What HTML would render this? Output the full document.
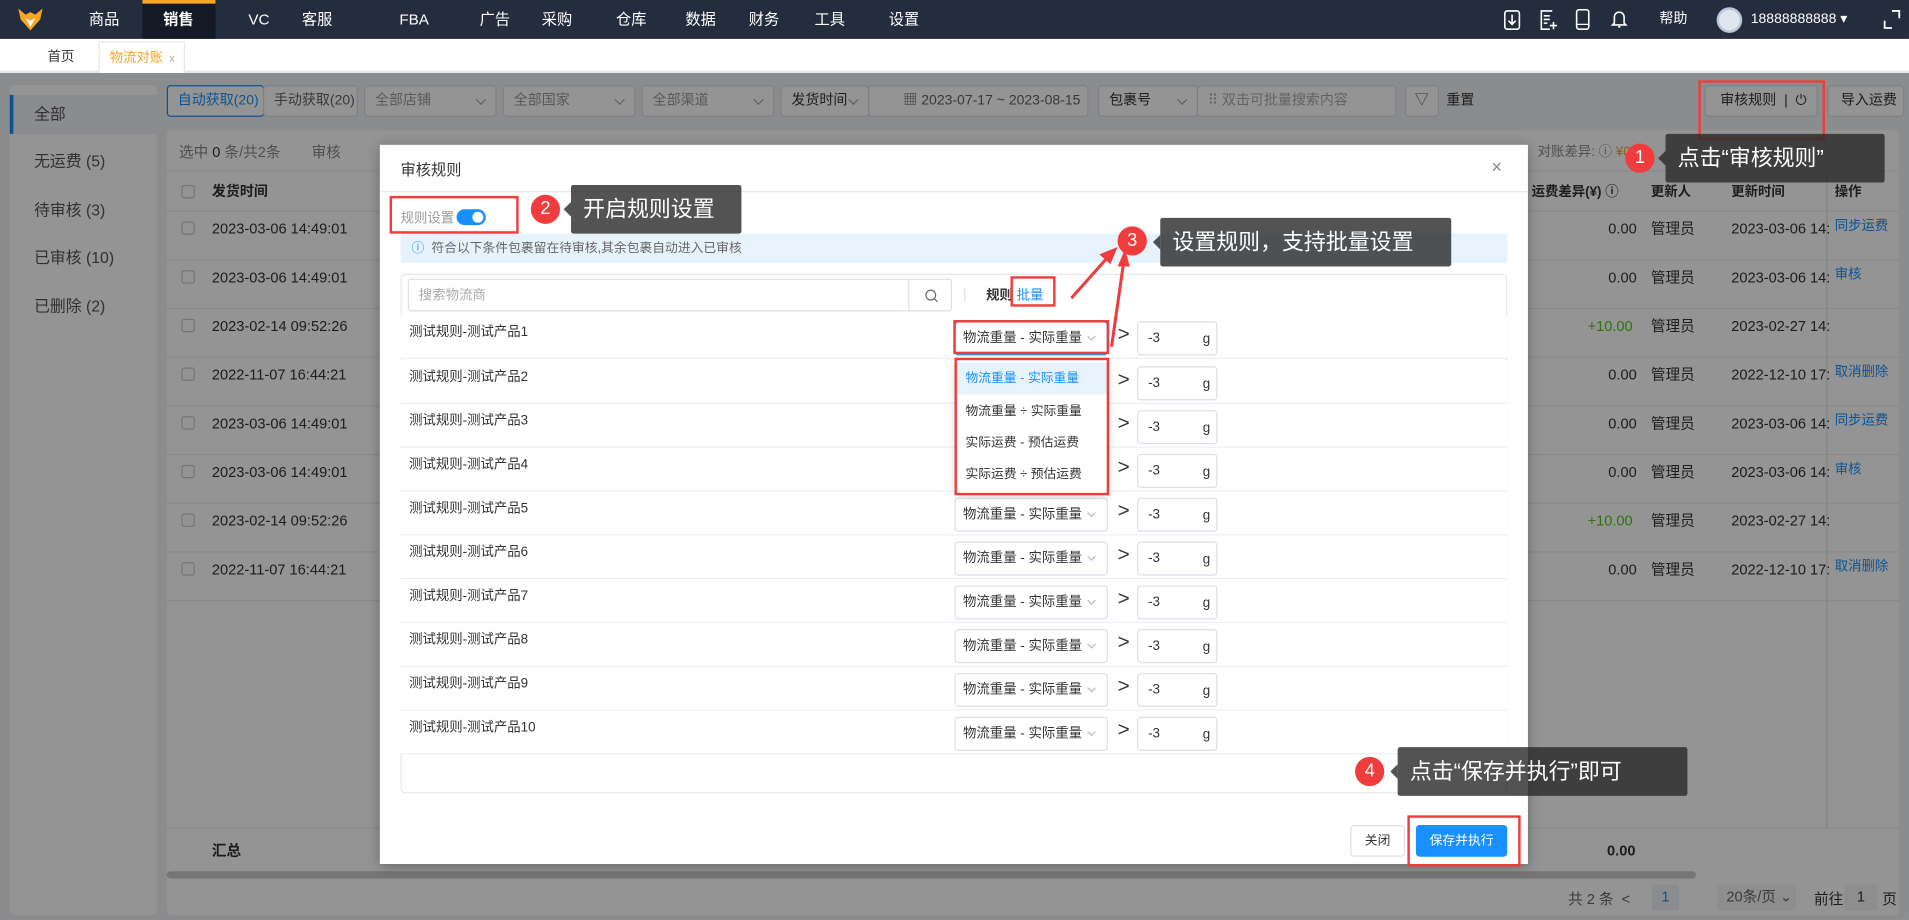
<!DOCTYPE html>
<html><head><meta charset="utf-8">
<style>
*{box-sizing:border-box;margin:0;padding:0}
html,body{width:1909px;height:920px;overflow:hidden;background:#f0f2f5}
body{font-family:"Liberation Sans","Noto Sans CJK SC",sans-serif;font-size:12px;color:#333;line-height:14px;white-space:nowrap}
#w{position:absolute;left:0;top:0;width:1568px;height:756px;transform:scale(1.21747,1.2169);transform-origin:0 0;background:#f0f2f5;overflow:hidden}
.a{position:absolute}
.nav{left:0;top:0;width:1568px;height:32px;background:#232d3d;color:#fff;font-size:12.5px}
.nav span{position:absolute;top:10px;line-height:13px}
.tabs{left:0;top:32px;width:1568px;height:28px;background:#fff;border-bottom:2px solid #e4e7ed}
.btn{position:absolute;background:#fff;border:1px solid #dcdfe6;border-radius:3px;color:#606266;font-size:11.5px;line-height:24px;padding:0 8px;height:26px;overflow:hidden}
.sel{color:#999}
.sel:after{content:"";position:absolute;right:9px;top:8px;width:5px;height:5px;border-right:1px solid #aaa;border-bottom:1px solid #aaa;transform:rotate(45deg)}
.side{left:8px;top:70px;width:121px;height:682px;background:#fff;border-radius:4px}
.side div{position:absolute;left:0;width:121px;padding-left:20px;font-size:13px;color:#555}
.card{left:137px;top:107px;width:1423px;height:645px;background:#fff;border-radius:4px}
.row{position:absolute;left:137px;width:1423px;height:40px;border-bottom:1px solid #ebeef5}
.cb{position:absolute;left:12px;width:11px;height:11px;border:1px solid #ccc;border-radius:2px;background:#fff}
.ov{left:0;top:60px;width:1568px;height:696px;background:rgba(0,0,0,0.42)}
.modal{left:312px;top:119px;width:943px;height:591px;background:#fff;box-shadow:0 2px 10px rgba(0,0,0,.3)}
.mrow{position:absolute;left:329px;width:909px;height:36px;border-bottom:1px solid #ebeef5;background:#fff}
.mrow .t{position:absolute;left:7px;top:7px;font-size:11px;color:#333}
.ms{position:absolute;left:455px;top:5px;width:126px;height:28px;border:1px solid #dcdfe6;border-radius:3px;font-size:11px;line-height:26px;padding-left:6px;color:#333}
.ms:after{content:"";position:absolute;right:10px;top:9px;width:4px;height:4px;border-right:1px solid #bbb;border-bottom:1px solid #bbb;transform:rotate(45deg)}
.gt{position:absolute;left:589px;top:7px;font-size:17px;line-height:17px;color:#333}
.mi{position:absolute;left:605px;top:5px;width:66px;height:28px;border:1px solid #dcdfe6;border-radius:3px;font-size:11px;line-height:26px;padding-left:8px}
.mi b{position:absolute;right:5px;font-weight:normal;top:1px}
.rb{position:absolute;border:2px solid #f03c3c}
.circ{position:absolute;width:24px;height:24px;border-radius:50%;background:#f03c3c;color:#fff;text-align:center;line-height:24px;font-size:15px}
.tip{position:absolute;background:rgba(40,40,40,.8);color:#fff;font-size:18px;height:40px;line-height:40px;padding:0 10px;border-radius:2px}
.tip:before{content:"";position:absolute;left:-6px;top:14px;border-top:6px solid transparent;border-bottom:6px solid transparent;border-right:6px solid rgba(40,40,40,.8)}
.blue{color:#1890ff}
</style></head><body><div id="w">

<div class="a nav">
 <svg class="a" style="left:14px;top:6px" width="22" height="20" viewBox="0 0 22 20"><path d="M1 1 L7 6 L11 4 L15 6 L21 1 L19 10 L11 19 L3 10 Z" fill="#f5a623"/><path d="M7 9 L11 16 L15 9 L11 11 Z" fill="#fff"/></svg>
 <div class="a" style="left:117px;top:0;width:60px;height:32px;background:#131a26;border-top:3px solid #f5a623"></div>
 <span style="left:73px">商品</span><span style="left:134px;font-weight:bold">销售</span><span style="left:204px">VC</span><span style="left:248px">客服</span><span style="left:328px">FBA</span><span style="left:394px">广告</span><span style="left:445px">采购</span><span style="left:506px">仓库</span><span style="left:563px">数据</span><span style="left:615px">财务</span><span style="left:669px">工具</span><span style="left:730px">设置</span>
 <svg class="a" style="left:1235px;top:8px" width="14" height="17" viewBox="0 0 14 17"><rect x="1" y="1" width="12" height="15" rx="2" stroke="#fff" fill="none" stroke-width="1.3"/><path d="M7 4 V12 M4 9 L7 12 L10 9" stroke="#fff" fill="none" stroke-width="1.3"/></svg>
 <svg class="a" style="left:1265px;top:8px" width="14" height="17" viewBox="0 0 14 17"><path d="M10 1 H1 V16 H8 M3 5 H8 M3 8 H8 M3 11 H6 M11 10 V16 M8 13 H14" stroke="#fff" fill="none" stroke-width="1.3"/></svg>
 <svg class="a" style="left:1294px;top:7px" width="12" height="18" viewBox="0 0 12 18"><rect x="1" y="1" width="10" height="16" rx="2" stroke="#fff" fill="none" stroke-width="1.3"/><path d="M1 13 H11" stroke="#fff"/></svg>
 <svg class="a" style="left:1323px;top:7px" width="14" height="17" viewBox="0 0 14 17"><path d="M3 12 V7 a4 4 0 0 1 8 0 V12 L12.5 13.5 H1.5 Z M6 15 h2" stroke="#fff" fill="none" stroke-width="1.3"/></svg>
 <span style="left:1363px;font-size:11.5px">帮助</span>
 <div class="a" style="left:1410px;top:6px;width:21px;height:21px;border-radius:50%;background:#dfe6f0;border:2px solid #b9c7db"></div>
 <span style="left:1438px;font-size:11.5px">18888888888 ▾</span>
 <svg class="a" style="left:1547px;top:8px" width="14" height="16" viewBox="0 0 14 16"><path d="M1 9 V15 H7 M7 1 H13 V7" stroke="#fff" fill="none" stroke-width="1.5"/></svg>
</div>
<div class="a tabs">
 <span class="a" style="left:39px;top:8px;font-size:11px">首页</span>
 <div class="a" style="left:81px;top:2px;width:71px;height:26px;border:1px solid #e4e7ed;border-bottom:none;background:#fff"><span class="a" style="left:8px;top:6px;font-size:11px;color:#f5a623">物流对账</span><span class="a" style="left:57px;top:6px;font-size:9px;color:#aaa">x</span></div>
</div>

<div class="a side">
 <div style="top:8px;height:32px;line-height:32px;background:#eef1f6;border-left:3px solid #1890ff;padding-left:17px">全部</div>
 <div style="top:56px">无运费 (5)</div><div style="top:96px">待审核 (3)</div><div style="top:135px">已审核 (10)</div><div style="top:175px">已删除 (2)</div>
</div>

<div class="btn" style="left:137px;top:70px;width:80px;color:#1890ff;border-color:#1890ff;padding:0 8px">自动获取(20)</div>
<div class="btn" style="left:216px;top:70px;width:78px">手动获取(20)</div>
<div class="btn sel" style="left:299px;top:70px;width:109px">全部店铺</div>
<div class="btn sel" style="left:413px;top:70px;width:109px">全部国家</div>
<div class="btn sel" style="left:527px;top:70px;width:109px">全部渠道</div>
<div class="btn sel" style="left:641px;top:70px;width:73px;color:#333">发货时间</div>
<div class="btn" style="left:713px;top:70px;width:181px;padding-left:28px">▦ 2023-07-17 ~ 2023-08-15</div>
<div class="btn sel" style="left:902px;top:70px;width:82px;color:#333">包裹号</div>
<div class="btn" style="left:983px;top:70px;width:164px;color:#aaa;padding-left:8px">⠿ 双击可批量搜索内容</div>
<div class="btn" style="left:1154px;top:70px;width:28px;padding:0 7px">▽</div>
<span class="a" style="left:1188px;top:76px;font-size:11.5px">重置</span>
<div class="btn" style="left:1400px;top:70px;width:93px;color:#333;padding-left:12px">审核规则 &nbsp;|&nbsp; ⏻</div>
<div class="btn" style="left:1501px;top:70px;width:63px;color:#333;padding:0 10px">导入运费</div>

<div class="a card"></div>
<span class="a" style="left:147px;top:118px;color:#888">选中 <b style="color:#333;font-weight:normal">0</b> 条/共2条</span>
<span class="a" style="left:256px;top:118px;color:#888">审核</span>
<span class="a" style="left:1263px;top:118px;color:#888;font-size:11px">对账差异: ⓘ <span style="color:#e6a23c">¥0.00</span></span>
<div class="a" style="left:137px;top:140px;width:1423px;height:1px;background:#ebeef5"></div>
<div class="row" style="top:141px;height:33px"><div class="cb" style="top:11px"></div><b class="a" style="left:37px;top:10px;font-size:11.5px">发货时间</b><b class="a" style="left:1121px;top:10px;font-size:11px">运费差异(¥) ⓘ</b><b class="a" style="left:1219px;top:10px;font-size:11px">更新人</b><b class="a" style="left:1285px;top:10px;font-size:11px">更新时间</b><b class="a" style="left:1370px;top:10px;font-size:11px">操作</b></div>
<div class="row" style="top:174px"><div class="cb" style="top:8px"></div><span class="a" style="left:37px;top:7px">2023-03-06 14:49:01</span><span class="a" style="left:1184px;top:7px">0.00</span><span class="a" style="left:1219px;top:7px">管理员</span><span class="a" style="left:1285px;top:7px">2023-03-06 14:</span><span class="a blue" style="left:1370px;top:5px;font-size:11px">同步运费</span></div>
<div class="row" style="top:214px"><div class="cb" style="top:8px"></div><span class="a" style="left:37px;top:7px">2023-03-06 14:49:01</span><span class="a" style="left:1184px;top:7px">0.00</span><span class="a" style="left:1219px;top:7px">管理员</span><span class="a" style="left:1285px;top:7px">2023-03-06 14:</span><span class="a blue" style="left:1370px;top:5px;font-size:11px">审核</span></div>
<div class="row" style="top:254px"><div class="cb" style="top:8px"></div><span class="a" style="left:37px;top:7px">2023-02-14 09:52:26</span><span class="a" style="left:1167px;top:7px;color:#52c41a">+10.00</span><span class="a" style="left:1219px;top:7px">管理员</span><span class="a" style="left:1285px;top:7px">2023-02-27 14:</span></div>
<div class="row" style="top:294px"><div class="cb" style="top:8px"></div><span class="a" style="left:37px;top:7px">2022-11-07 16:44:21</span><span class="a" style="left:1184px;top:7px">0.00</span><span class="a" style="left:1219px;top:7px">管理员</span><span class="a" style="left:1285px;top:7px">2022-12-10 17:</span><span class="a blue" style="left:1370px;top:5px;font-size:11px">取消删除</span></div>
<div class="row" style="top:334px"><div class="cb" style="top:8px"></div><span class="a" style="left:37px;top:7px">2023-03-06 14:49:01</span><span class="a" style="left:1184px;top:7px">0.00</span><span class="a" style="left:1219px;top:7px">管理员</span><span class="a" style="left:1285px;top:7px">2023-03-06 14:</span><span class="a blue" style="left:1370px;top:5px;font-size:11px">同步运费</span></div>
<div class="row" style="top:374px"><div class="cb" style="top:8px"></div><span class="a" style="left:37px;top:7px">2023-03-06 14:49:01</span><span class="a" style="left:1184px;top:7px">0.00</span><span class="a" style="left:1219px;top:7px">管理员</span><span class="a" style="left:1285px;top:7px">2023-03-06 14:</span><span class="a blue" style="left:1370px;top:5px;font-size:11px">审核</span></div>
<div class="row" style="top:414px"><div class="cb" style="top:8px"></div><span class="a" style="left:37px;top:7px">2023-02-14 09:52:26</span><span class="a" style="left:1167px;top:7px;color:#52c41a">+10.00</span><span class="a" style="left:1219px;top:7px">管理员</span><span class="a" style="left:1285px;top:7px">2023-02-27 14:</span></div>
<div class="row" style="top:454px"><div class="cb" style="top:8px"></div><span class="a" style="left:37px;top:7px">2022-11-07 16:44:21</span><span class="a" style="left:1184px;top:7px">0.00</span><span class="a" style="left:1219px;top:7px">管理员</span><span class="a" style="left:1285px;top:7px">2022-12-10 17:</span><span class="a blue" style="left:1370px;top:5px;font-size:11px">取消删除</span></div>
<div class="a" style="left:1500px;top:141px;width:1px;height:540px;background:#e0e0e0"></div>
<div class="a" style="left:137px;top:680px;width:1423px;height:36px;border-top:1px solid #ebeef5"><b class="a" style="left:37px;top:11px">汇总</b><b class="a" style="left:1183px;top:11px">0.00</b></div>
<div class="a" style="left:137px;top:716px;width:1256px;height:6px;background:#ccc;border-radius:3px"></div>
<span class="a" style="left:1288px;top:732px;color:#666">共 2 条 &nbsp;&lt;</span>
<div class="a" style="left:1357px;top:727px;width:22px;height:21px;background:#eef2f8;color:#1890ff;text-align:center;line-height:21px">1</div>
<div class="a" style="left:1410px;top:727px;width:65px;height:21px;background:#f4f4f5;color:#666;padding-left:8px;line-height:21px">20条/页 ⌄</div>
<span class="a" style="left:1490px;top:732px">前往</span><div class="a" style="left:1515px;top:727px;width:27px;height:21px;background:#f4f4f5;text-align:center;line-height:21px">1</div><span class="a" style="left:1546px;top:732px">页</span>

<div class="a ov"></div>

<div class="a modal">
 <span class="a" style="left:17px;top:14px;font-size:12.5px">审核规则</span>
 <span class="a" style="left:913px;top:12px;font-size:15px;color:#888">×</span>
 <div class="a" style="left:0;top:38px;width:943px;height:1px;background:#e4e7ed"></div>
 <span class="a" style="left:17px;top:54px;font-size:11px;color:#999">规则设置</span>
 <div class="a" style="left:63px;top:53px;width:24px;height:13px;border-radius:7px;background:#1890ff"><div class="a" style="left:13px;top:2px;width:9px;height:9px;border-radius:50%;background:#fff"></div></div>
 <div class="a" style="left:17px;top:73px;width:909px;height:24px;background:#e6f3fd;border-radius:2px"><span class="a" style="left:9px;top:5px;font-size:10.5px;color:#666"><span class="blue">ⓘ</span>&nbsp; 符合以下条件包裹留在待审核,其余包裹自动进入已审核</span></div>
 <div class="a" style="left:17px;top:106px;width:909px;height:427px;border:1px solid #e4e7ed;border-radius:4px"></div>
 <div class="a" style="left:23px;top:110px;width:447px;height:27px;border:1px solid #dcdfe6;border-radius:3px"><span class="a" style="left:8px;top:6px;font-size:11px;color:#aaa">搜索物流商</span><div class="a" style="left:410px;top:0;width:1px;height:25px;background:#dcdfe6"></div>
 <svg class="a" style="left:423px;top:7px" width="12" height="12" viewBox="0 0 12 12"><circle cx="5.5" cy="5.5" r="4" stroke="#666" fill="none"/><path d="M8.5 8.5 L11 11" stroke="#666"/></svg></div>
 <div class="a" style="left:480px;top:118px;width:1px;height:11px;background:#ddd"></div>
 <span class="a" style="left:498px;top:117px;font-size:11px"><b>规则</b> <span class="blue">批量</span></span>
</div>

<div class="mrow" style="top:259px"><span class="t">测试规则-测试产品1</span><div class="ms" style="border-color:#1890ff">物流重量 - 实际重量</div><span class="gt">&gt;</span><div class="mi">-3<b>g</b></div></div>
<div class="mrow" style="top:296px"><span class="t">测试规则-测试产品2</span><span class="gt">&gt;</span><div class="mi">-3<b>g</b></div></div>
<div class="mrow" style="top:332px"><span class="t">测试规则-测试产品3</span><span class="gt">&gt;</span><div class="mi">-3<b>g</b></div></div>
<div class="mrow" style="top:368px"><span class="t">测试规则-测试产品4</span><span class="gt">&gt;</span><div class="mi">-3<b>g</b></div></div>
<div class="mrow" style="top:404px"><span class="t">测试规则-测试产品5</span><div class="ms">物流重量 - 实际重量</div><span class="gt">&gt;</span><div class="mi">-3<b>g</b></div></div>
<div class="mrow" style="top:440px"><span class="t">测试规则-测试产品6</span><div class="ms">物流重量 - 实际重量</div><span class="gt">&gt;</span><div class="mi">-3<b>g</b></div></div>
<div class="mrow" style="top:476px"><span class="t">测试规则-测试产品7</span><div class="ms">物流重量 - 实际重量</div><span class="gt">&gt;</span><div class="mi">-3<b>g</b></div></div>
<div class="mrow" style="top:512px"><span class="t">测试规则-测试产品8</span><div class="ms">物流重量 - 实际重量</div><span class="gt">&gt;</span><div class="mi">-3<b>g</b></div></div>
<div class="mrow" style="top:548px"><span class="t">测试规则-测试产品9</span><div class="ms">物流重量 - 实际重量</div><span class="gt">&gt;</span><div class="mi">-3<b>g</b></div></div>
<div class="mrow" style="top:584px"><span class="t">测试规则-测试产品10</span><div class="ms">物流重量 - 实际重量</div><span class="gt">&gt;</span><div class="mi">-3<b>g</b></div></div>

<div class="a" style="left:785px;top:296px;width:125px;height:110px;background:#fff;box-shadow:0 2px 8px rgba(0,0,0,.15);font-size:10.5px">
 <div class="a blue" style="left:0;top:2px;width:125px;height:26px;background:#e6f3fd;line-height:26px;padding-left:8px">物流重量 - 实际重量</div>
 <div class="a" style="left:8px;top:35px">物流重量 ÷ 实际重量</div>
 <div class="a" style="left:8px;top:61px">实际运费 - 预估运费</div>
 <div class="a" style="left:8px;top:87px">实际运费 ÷ 预估运费</div>
</div>

<div class="a" style="left:1109px;top:678px;width:45px;height:26px;border:1px solid #dcdfe6;border-radius:3px;background:#fff;text-align:center;line-height:24px;font-size:10.5px">关闭</div>
<div class="a" style="left:1163px;top:678px;width:75px;height:26px;border-radius:3px;background:#1890ff;color:#fff;text-align:center;line-height:26px;font-size:10.5px">保存并执行</div>

<div class="rb" style="left:1395px;top:66px;width:104px;height:49px"></div>
<div class="circ" style="left:1335px;top:118px">1</div>
<div class="tip" style="left:1368px;top:110px;width:180px">点击“审核规则”</div>
<div class="rb" style="left:320px;top:161px;width:106px;height:31px"></div>
<div class="circ" style="left:436px;top:160px">2</div>
<div class="tip" style="left:469px;top:152px;width:140px">开启规则设置</div>
<div class="rb" style="left:830px;top:227px;width:37px;height:25px"></div>
<div class="circ" style="left:918px;top:186px">3</div>
<div class="tip" style="left:953px;top:179px;width:239px">设置规则，支持批量设置</div>
<svg class="a" style="left:870px;top:195px" width="70" height="100" viewBox="0 0 70 100"><path d="M10 50 L42 14" stroke="#f03c3c" stroke-width="2.5"/><path d="M48 8 L33 14 L42 22 Z" fill="#f03c3c"/><path d="M43 90 L53 20" stroke="#f03c3c" stroke-width="2.5"/><path d="M54 10 L48 24 L58 24 Z" fill="#f03c3c"/></svg>
<div class="rb" style="left:783px;top:263px;width:128px;height:28px"></div>
<div class="rb" style="left:784px;top:294px;width:127px;height:113px"></div>
<div class="circ" style="left:1113px;top:622px">4</div>
<div class="tip" style="left:1148px;top:614px;width:238px">点击“保存并执行”即可</div>
<div class="rb" style="left:1156px;top:670px;width:93px;height:42px"></div>

</div></body></html>
